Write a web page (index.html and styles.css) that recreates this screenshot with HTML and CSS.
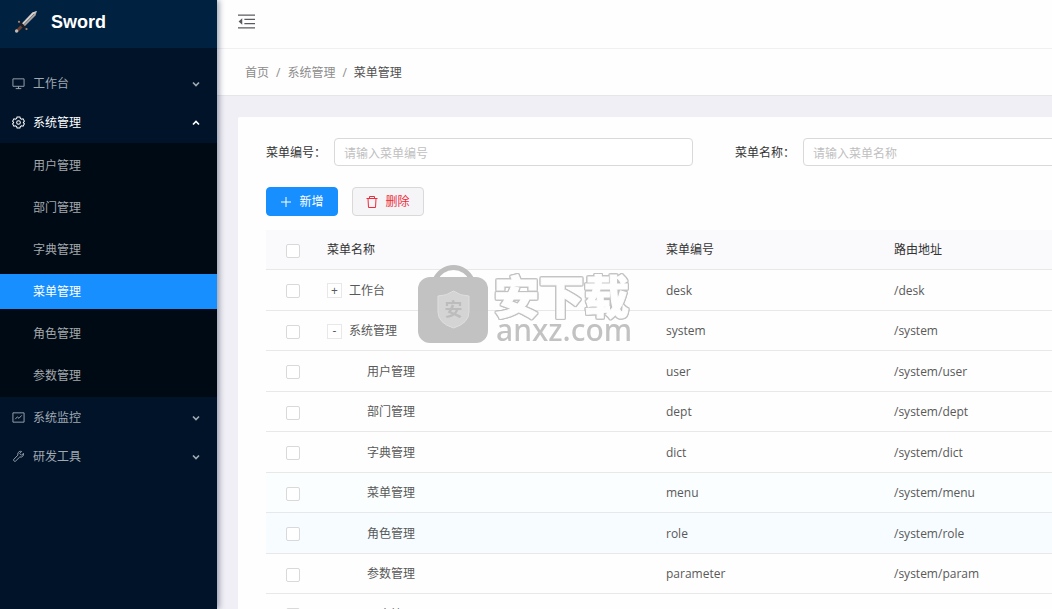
FILE: index.html
```html
<!DOCTYPE html>
<html lang="zh-CN">
<head>
<meta charset="utf-8">
<title>Sword - 菜单管理</title>
<link rel="stylesheet" href="styles.css">
</head>
<body>
<svg class="defs" aria-hidden="true">
  <symbol id="chevron" viewBox="0 0 10 10"><path d="M2 3.5 5 6.5 8 3.5" fill="none" stroke="currentColor" stroke-width="1.7"/></symbol>
</svg>
<div class="app">
  <aside class="sidebar">
    <a class="brand" href="#">
      <svg class="sword" viewBox="0 0 24 24" aria-hidden="true">
        <path d="M7 14.500 18.500 2.500 23 1 21.500 5.500 10 17Z" fill="#aaa6a4"/>
        <path d="M7 14.500 18.500 2.500 23 1 8.500 15.800Z" fill="#d5d1ce"/>
        <path d="M9 15.500 20 4" stroke="#77757a" stroke-width="1"/>
        <path d="M5 11.500 12.500 19.500" stroke="#221d20" stroke-width="2.200" stroke-linecap="round"/>
        <path d="M7.500 16.500 3 21" stroke="#6b4030" stroke-width="3"/>
        <circle cx="2.600" cy="21" r="1.700" fill="#c3b9b0"/>
        <circle cx="5" cy="11.800" r="1.100" fill="#9b8b80"/><circle cx="12.500" cy="19" r="1.100" fill="#9b8b80"/>
      </svg>
      <span>Sword</span>
    </a>
    <nav class="menu" aria-label="主菜单">
      <button class="menu-item" type="button">
        <svg class="icon" viewBox="0 0 14 14"><path d="M1 2h12v8H1zM7 10v2.500M4 12.500h6" fill="none" stroke="currentColor"/></svg>
        <span>工作台</span><svg class="arrow"><use href="#chevron"/></svg>
      </button>
      <button class="menu-item open" type="button" aria-expanded="true">
        <svg class="icon" viewBox="0 0 14 14"><path d="M5.500 1h3l.5 1.700 1.200.7 1.700-.4 1.500 2.600L12.200 7l1.200 1.400-1.500 2.600-1.700-.4-1.200.7-.5 1.700h-3L5 11.300l-1.200-.7-1.700.4L.6 8.400 1.800 7 .6 5.600 2.100 3l1.700.4L5 2.700Z" fill="none" stroke="currentColor" stroke-width="1.100"/><circle cx="7" cy="7" r="2" fill="none" stroke="currentColor" stroke-width="1.100"/></svg>
        <span>系统管理</span><svg class="arrow"><use href="#chevron"/></svg>
      </button>
      <div class="submenu">
        <a href="#">用户管理</a>
        <a href="#">部门管理</a>
        <a href="#">字典管理</a>
        <a href="#" class="active" aria-current="page">菜单管理</a>
        <a href="#">角色管理</a>
        <a href="#">参数管理</a>
      </div>
      <button class="menu-item" type="button">
        <svg class="icon" viewBox="0 0 14 14"><path d="M1 2h12v10H1zM3.500 8.800 5.800 6.300l1.700 1.600 3-3.200" fill="none" stroke="currentColor"/></svg>
        <span>系统监控</span><svg class="arrow"><use href="#chevron"/></svg>
      </button>
      <button class="menu-item" type="button">
        <svg class="icon" viewBox="0 0 14 14"><path d="M10.300 1.600C8.600.9 6.400 2 6.200 4.200l.2 1.300-4.500 4.600c-.9 1 .9 2.800 1.900 1.900L8.400 7.500c2.400.8 4.600-1.400 3.900-3.900L10.200 5.700 8.300 3.800Z" fill="none" stroke="currentColor"/></svg>
        <span>研发工具</span><svg class="arrow"><use href="#chevron"/></svg>
      </button>
    </nav>
  </aside>

  <div class="main">
    <header class="topbar">
      <button class="fold" type="button" aria-label="收起菜单">
        <svg viewBox="0 0 16 14"><path d="M0 1h16M6 5h10M6 9h10M0 13h16" stroke="currentColor" stroke-width="1.400"/><path d="M4 4v6L.5 7Z" fill="currentColor"/></svg>
      </button>
    </header>
    <nav class="breadcrumb" aria-label="面包屑">
      <a href="#">首页</a><span>/</span><a href="#">系统管理</a><span>/</span><b>菜单管理</b>
    </nav>
    <main class="content">
      <section class="card">
        <form class="filters">
          <div class="field"><label for="code">菜单编号：</label><input id="code" type="text" placeholder="请输入菜单编号"></div>
          <div class="field"><label for="name">菜单名称：</label><input id="name" type="text" placeholder="请输入菜单名称"></div>
        </form>
        <div class="actions">
          <button class="btn primary" type="button"><svg viewBox="0 0 12 12"><path d="M6 1v10M1 6h10" stroke="currentColor"/></svg>新增</button>
          <button class="btn danger" type="button"><svg viewBox="0 0 12 12"><path d="M.5 2.500h11M3.500 2.500v-2h5v2M2 2.500l.5 9h7l.5-9" fill="none" stroke="currentColor"/></svg>删除</button>
        </div>
        <div class="table-wrap">
          <table>
            <colgroup><col class="c-check"><col class="c-name"><col class="c-code"><col></colgroup>
            <thead><tr><th><input type="checkbox" aria-label="全选"></th><th>菜单名称</th><th>菜单编号</th><th>路由地址</th></tr></thead>
            <tbody>
              <tr><td><input type="checkbox" aria-label="选择工作台"></td><td><button class="toggle" type="button">+</button>工作台</td><td>desk</td><td>/desk</td></tr>
              <tr><td><input type="checkbox" aria-label="选择系统管理"></td><td><button class="toggle" type="button">-</button>系统管理</td><td>system</td><td>/system</td></tr>
              <tr><td><input type="checkbox" aria-label="选择用户管理"></td><td class="child">用户管理</td><td>user</td><td>/system/user</td></tr>
              <tr><td><input type="checkbox" aria-label="选择部门管理"></td><td class="child">部门管理</td><td>dept</td><td>/system/dept</td></tr>
              <tr><td><input type="checkbox" aria-label="选择字典管理"></td><td class="child">字典管理</td><td>dict</td><td>/system/dict</td></tr>
              <tr class="fading"><td><input type="checkbox" aria-label="选择菜单管理"></td><td class="child">菜单管理</td><td>menu</td><td>/system/menu</td></tr>
              <tr class="hovered"><td><input type="checkbox" aria-label="选择角色管理"></td><td class="child">角色管理</td><td>role</td><td>/system/role</td></tr>
              <tr><td><input type="checkbox" aria-label="选择参数管理"></td><td class="child">参数管理</td><td>parameter</td><td>/system/param</td></tr>
              <tr><td><input type="checkbox" aria-label="选择日志管理"></td><td class="child">日志管理</td><td></td><td></td></tr>
            </tbody>
          </table>
          <div class="watermark">
            <svg class="bag" viewBox="0 0 70 80" aria-hidden="true">
              <path d="M17 17a20 20 0 0 1 37 0" fill="none" stroke="#bbb" stroke-width="5"/>
              <rect y="14" width="70" height="66" rx="12" fill="#bfbfbf"/>
              <path d="M35.500 28q7 5 15.500 5v16q0 11-15.500 16Q20 60 20 49V33q8.500 0 15.500-5Z" fill="#d2d2d2" stroke="#dedede"/>
              <text x="35.500" y="53" text-anchor="middle" class="seal">安</text>
            </svg>
            <div class="mark-text"><span class="mark-cn">安下载</span><span class="mark-url">anxz.com</span></div>
          </div>
        </div>
      </section>
    </main>
  </div>
</div>
</body>
</html>
```
FILE: styles.css
```css
* { box-sizing: border-box; }
body {
  margin: 0;
  overflow: hidden;
  font: 12px/20px "Open Sans", "Noto Sans CJK SC", sans-serif;
  color: #595959;
  background: #f0eff5;
}
button, input { font: inherit; color: inherit; }
a { color: inherit; text-decoration: none; }
.defs { position: absolute; width: 0; height: 0; }
.app { display: flex; height: 100vh; }

.sidebar {
  position: relative;
  z-index: 1;
  flex: 0 0 217px;
  background: #001329;
  box-shadow: 2px 0 6px rgba(0, 21, 61, .4);
}
.brand {
  display: flex;
  align-items: center;
  gap: 13px;
  height: 48px;
  padding: 0 14px 4px;
  background: #00213f;
  color: #fff;
  font: bold 18px/24px "Liberation Sans", Arial, sans-serif;
}
.sword { width: 24px; height: 24px; }
.menu { padding-top: 18px; }
.menu-item {
  display: flex;
  align-items: center;
  gap: 8px;
  width: 100%;
  height: 35px;
  margin-bottom: 4px;
  padding: 0 16px 0 12px;
  border: 0;
  background: none;
  color: #a0a8b1;
}
.menu-item .icon { width: 13px; height: 13px; }
.menu-item .arrow { width: 10px; height: 10px; margin-left: auto; }
.menu-item.open { color: #fff; margin-bottom: 3px; }
.open .arrow { transform: rotate(180deg); }
.submenu {
  display: flex;
  flex-direction: column;
  gap: 7px;
  margin-bottom: 3px;
  padding: 5px 0 4px;
  background: #000a14;
}
.submenu a { padding: 0 33px; line-height: 35px; color: #a3a8ad; }
.submenu .active { background: #188fff; color: #fff; }

.main { flex: 1; min-width: 0; overflow: hidden; }
.topbar { display: flex; align-items: center; height: 49px; padding: 0 21px 5px; background: #fefefe; border-bottom: 1px solid #f1eff4; }
.fold { display: flex; padding: 0; border: 0; background: none; color: #5c5a60; }
.fold svg { width: 17px; height: 15px; }
.breadcrumb { display: flex; gap: 7px; padding: 14px 28px 12px; background: #fefefe; border-bottom: 1px solid #e6e5ea; color: #8c8c8c; }
.breadcrumb b { font-weight: 400; color: #505050; }
.content { padding: 21px; }
.card { min-width: 1421px; min-height: 600px; padding: 21px 28px; background: #fefefe; border-radius: 2px; }
.filters { display: grid; grid-template-columns: repeat(3, 1fr); column-gap: 42px; }
.field { display: flex; align-items: center; color: #333; }
.field label { flex: 0 0 68px; padding-top: 1px; white-space: nowrap; }
.field input { flex: 1; min-width: 0; height: 28px; padding: 2px 9px 0; border: 1px solid #d9d9d9; border-radius: 4px; background: #fff; }
.field input::placeholder { color: #bfbfbf; }
.actions { display: flex; gap: 14px; padding: 21px 0 14px; }
.btn { display: flex; align-items: center; justify-content: center; gap: 7px; width: 72px; height: 29px; padding: 0; border: 1px solid; border-radius: 4px; }
.btn svg { width: 12px; height: 12px; }
.primary { background: #188fff; border-color: #188fff; color: #fff; }
.danger { background: #f5f4f6; border-color: #d9d9d9; color: #ee2c3c; }

.table-wrap { position: relative; }
table { width: 100%; table-layout: fixed; border-collapse: separate; border-spacing: 0; }
.c-check { width: 50px; }
.c-name { width: 339px; }
.c-code { width: 228px; }
th, td { height: 40px; padding: 1px 11px 0; border-bottom: 1px solid #e8e8e8; text-align: left; font-weight: 400; }
tbody tr:nth-child(odd) td { height: 41px; }
th { background: #faf9fc; color: #333; }
th:first-child, td:first-child { padding: 2px 0 0 20px; }
.child { padding-left: 51px; }
.fading td { background: #fafeff; }
.hovered td { background: #f6fcff; }
input[type="checkbox"] { appearance: none; display: block; width: 14px; height: 14px; margin: 0; border: 1px solid #d9d9d9; border-radius: 2px; background: #fff; }
.toggle { width: 15px; height: 15px; margin-right: 7px; padding: 0; border: 1px solid #e8e8e8; background: #fff; line-height: 12px; }

.watermark { position: absolute; left: 152px; top: 33px; display: flex; gap: 5px; pointer-events: none; opacity: .95; }
.bag { width: 70px; height: 80px; }
.seal { font: 700 18px "Noto Sans CJK SC", sans-serif; fill: #b9b9b9; }
.mark-text { display: flex; flex-direction: column; padding-top: 12px; white-space: nowrap; }
.mark-cn {
  padding-left: 1px;
  font: 900 45px/40px "Noto Sans CJK SC", sans-serif;
  color: #fefefe;
  -webkit-text-stroke: 1px #fefefe;
  filter: drop-shadow(1px 0 0 #bfbfbf) drop-shadow(-1px 0 0 #bfbfbf) drop-shadow(0 1px 0 #bfbfbf) drop-shadow(0 -1px 0 #bfbfbf);
}
.mark-url { padding-left: 3px; font: 500 30px/30px "Noto Sans", sans-serif; color: #bfbfbf; }
```
